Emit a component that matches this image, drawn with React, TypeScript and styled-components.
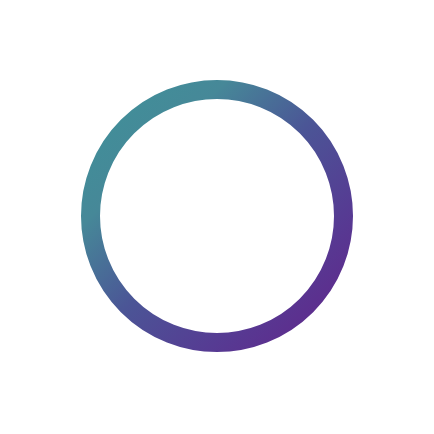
import React from "react";
import styled, { createGlobalStyle } from "styled-components";

const Global = createGlobalStyle`
  html, body { margin: 0; padding: 0; background: #ffffff; }
  body { font-family: "Liberation Sans", Arial, sans-serif; }
`;

const Stage = styled.div`
  width: 434px;
  height: 434px;
  display: flex;
  align-items: center;
  justify-content: center;
  padding-bottom: 2px;
  box-sizing: border-box;
`;

const RingSvg = styled.svg`
  display: block;
  width: 272px;
  height: 272px;
`;

export default function App() {
  return (
    <>
      <Global />
      <Stage>
        <RingSvg viewBox="0 0 272 272" aria-label="loading">
          <defs>
            <linearGradient id="ringGrad" x1="0" y1="0" x2="1" y2="1">
              <stop offset="0" stopColor="#3f9199" />
              <stop offset="0.25" stopColor="#468898" />
              <stop offset="0.5" stopColor="#4b5596" />
              <stop offset="0.75" stopColor="#563b93" />
              <stop offset="1" stopColor="#62248a" />
            </linearGradient>
          </defs>
          <circle cx="136" cy="136" r="126.5" fill="none" stroke="url(#ringGrad)" strokeWidth="19" />
        </RingSvg>
      </Stage>
    </>
  );
}
